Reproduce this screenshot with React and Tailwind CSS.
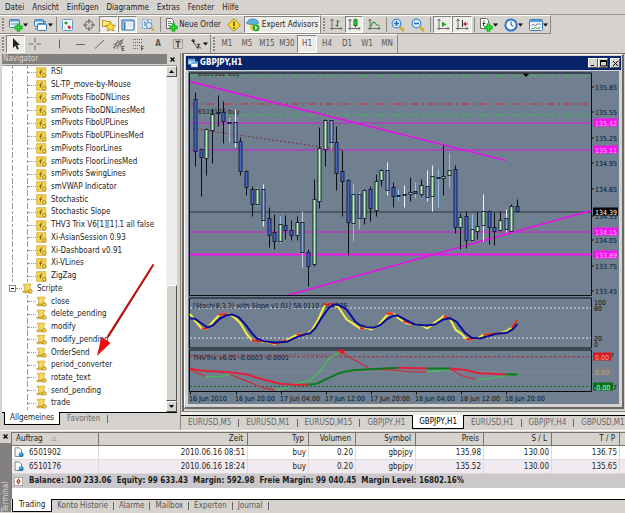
const menus = ["Datei", "Ansicht", "Einfügen", "Diagramme", "Extras", "Fenster", "Hilfe"];
const periods = ["M1", "M5", "M15", "M30", "H1", "H4", "D1", "W1", "MN"];

const indicators = [
  "RSI",
  "SL-TP_move-by-Mouse",
  "smPivots FiboDNLines",
  "smPivots FiboDNLinesMed",
  "smPivots FiboUPLines",
  "smPivots FiboUPLinesMed",
  "smPivots FloorLines",
  "smPivots FloorLinesMed",
  "smPivots SwingLines",
  "smVWAP Indicator",
  "Stochastic",
  "Stochastic Slope",
  "THV3 Trix V6[1][1].1 all false",
  "Xi-AsianSession 0.93",
  "Xi-Dashboard v0.91",
  "Xi-VLines",
  "ZigZag",
];

const scripts = [
  "close",
  "delete_pending",
  "modify",
  "modify_pending",
  "OrderSend",
  "period_converter",
  "rotate_text",
  "send_pending",
  "trade",
];

const chartTabs = [
  "EURUSD,M5",
  "EURUSD,M1",
  "EURUSD,M15",
  "GBPJPY,H1",
  "GBPJPY,H1",
  "EURUSD,H1",
  "GBPJPY,H4",
  "GBPUSD,M15",
];

const orders = [
  ["6501902", "2010.06.16 08:51", "buy", "0.20", "gbpjpy", "135.98", "130.00", "136.75"],
  ["6510176", "2010.06.16 18:24", "buy", "0.20", "gbpjpy", "135.52", "130.00", "135.65"],
];

const terminalTabs = ["Konto Historie", "Alarme", "Mailbox", "Experten", "Journal"];

// body colour, wick colour, high, open/close top, open/close bottom, low
const B = "#4663cf";
const P = "#8ea6dc";
const G = "#b4f5b6";
const K = "#0b1018";
const W = "#f0f4f8";
const S = "#8cc4ea";
const candles = [
  [B, K, 93, 100, 152, 167],
  [B, K, 149, 150, 158, 197],
  [G, K, 129, 130, 159, 176],
  [G, K, 110, 115, 131, 164],
  [B, K, 96, 113, 114, 127],
  [B, K, 102, 113, 122, 144],
  [B, S, 118, 123, 124, 143],
  [P, W, 110, 123, 143, 148],
  [B, K, 138, 142, 172, 176],
  [B, K, 171, 172, 188, 196],
  [B, K, 187, 190, 205, 217],
  [G, S, 188, 190, 205, 207],
  [P, W, 185, 190, 221, 227],
  [B, K, 208, 219, 236, 248],
  [B, K, 215, 233, 242, 250],
  [G, S, 217, 225, 242, 244],
  [B, K, 216, 226, 231, 240],
  [B, K, 221, 231, 236, 241],
  [G, K, 217, 223, 236, 241],
  [P, "#c3cbd6", 212, 223, 253, 268],
  [B, K, 250, 253, 267, 287],
  [G, K, 180, 200, 265, 267],
  [G, K, 128, 149, 202, 209],
  [G, K, 120, 121, 150, 167],
  [P, S, 120, 121, 143, 150],
  [B, K, 127, 143, 174, 191],
  [B, K, 151, 172, 182, 217],
  [B, K, 180, 181, 223, 256],
  [G, S, 184, 195, 224, 242],
  [P, S, 192, 195, 219, 230],
  [G, K, 190, 191, 219, 225],
  [B, K, 187, 190, 209, 222],
  [G, K, 175, 182, 211, 217],
  [G, K, 170, 171, 181, 187],
  [P, W, 163, 171, 191, 196],
  [B, K, 183, 188, 197, 208],
  [B, S, 190, 196, 197, 202],
  [B, W, 186, 195, 196, 208],
  [G, K, 178, 193, 195, 202],
  [B, S, 183, 192, 194, 199],
  [G, K, 180, 186, 195, 197],
  [P, W, 171, 187, 198, 202],
  [G, W, 166, 177, 197, 212],
  [B, S, 170, 178, 179, 208],
  [G, K, 146, 177, 179, 196],
  [G, S, 154, 171, 176, 188],
  [B, K, 166, 170, 228, 234],
  [G, K, 214, 218, 228, 250],
  [B, K, 212, 217, 241, 249],
  [G, S, 215, 230, 241, 242],
  [G, K, 212, 227, 232, 240],
  [G, W, 195, 212, 226, 242],
  [B, K, 211, 212, 228, 245],
  [B, K, 213, 228, 232, 246],
  [G, K, 212, 221, 231, 232],
  [P, W, 210, 219, 230, 233],
  [G, K, 205, 207, 232, 232],
  [B, K, 200, 207, 212, 213],
];

const priceScale = [
  ["135.85", 87],
  ["135.55", 112],
  ["135.25", 138],
  ["134.95", 163],
  ["134.65", 189],
  ["134.35", 216],
  ["134.05", 240],
  ["133.75", 266],
  ["133.45", 291],
];

const priceTags = [
  ["135.42", 123, "#f412f0", "#ffb8fb"],
  ["135.11", 150, "#f412f0", "#ffb8fb"],
  ["134.39", 212, "#000000", "#ffffff"],
  ["134.15", 232, "#f412f0", "#ffb8fb"],
  ["133.89", 255, "#f412f0", "#ffb8fb"],
];

const dates = [
  ["16 Jun 2010", 189],
  ["16 Jun 20:00", 235],
  ["17 Jun 04:00", 280],
  ["17 Jun 12:00", 325],
  ["17 Jun 20:00", 370],
  ["18 Jun 04:00", 415],
  ["18 Jun 12:00", 460],
  ["18 Jun 20:00", 505],
];

const Icon = ({ children, className = "w-[14px] h-[14px]" }) => (
  <svg viewBox="0 0 14 14" className={`${className} shrink-0`} fill="none" aria-hidden="true">
    {children}
  </svg>
);

const Plus = () => (
  <>
    <path d="M9.5 5.5v8M5.5 9.5h8" stroke="#0b7d12" strokeWidth="3.4" />
    <path d="M9.5 5v9M5 9.5h9" stroke="#2bdc33" strokeWidth="2" />
  </>
);

const Caret = () => (
  <svg viewBox="0 0 5 4" className="w-[5px] h-[4px] shrink-0" aria-hidden="true">
    <path d="M0 .5h5l-2.500 3z" fill="#000" />
  </svg>
);

const Grip = () => (
  <div className="w-[6px] shrink-0 flex justify-center py-[2px]">
    <div className="w-[2px] bg-[repeating-linear-gradient(#8a8782_0_2px,#e4e1dc_2px_3px)]" />
  </div>
);

const Sep = ({ className }) => (
  <div className={`${className} shrink-0 flex justify-center`}>
    <div className="w-px my-px bg-[#8b8883]" />
  </div>
);

const ToolButton = ({ label, pressed, className, children }) => (
  <button
    aria-label={label}
    className={`${className} shrink-0 h-full flex items-center justify-center ${
      pressed ? "bg-[#eeece9] border border-t-[#85827e] border-l-[#85827e] border-b-white border-r-white" : ""
    }`}
  >
    {children}
  </button>
);

const MenuBar = () => (
  <nav className="h-[14px] shrink-0 flex items-center gap-2 px-[5px] pt-px">
    {menus.map((m) => (
      <button key={m}>{m}</button>
    ))}
  </nav>
);

const axes = "M3 1v11M1 10.5h12M1.5 3L3 1l1.5 2M11.5 9l1.5 1.5-1.5 1.5";

const MainToolbar = () => (
  <div className="h-5 shrink-0 flex border-t border-[#9b9893]">
    <div className="flex border-t border-b border-t-white border-b-[#8b8883] border-r border-r-[#8b8883]">
      <Grip />
      <ToolButton label="Neues Diagramm" className="w-[25px]">
        <Icon>
          <rect x=".5" y="1.5" width="10" height="8" rx="1" fill="#eaf4fc" stroke="#3b79b4" />
          <path d="M1 2.500h9" stroke="#5b9bd6" strokeWidth="2" />
          <path d="M2 6h6" stroke="#4c8ac0" />
          <Plus />
        </Icon>
        <Caret />
      </ToolButton>
      <ToolButton label="Profile" className="w-[24px]">
        <Icon>
          <rect x=".5" y="1.5" width="9" height="7" rx="1" fill="#e6f0fa" stroke="#3b79b4" />
          <path d="M1 2.500h8" stroke="#5b9bd6" strokeWidth="2" />
          <rect x="3.5" y="5.5" width="9" height="7" rx="1" fill="#f6faff" stroke="#3b79b4" />
          <path d="M4 6.500h8" stroke="#5b9bd6" />
          <path d="M10 3.500h2M2 10v2" stroke="#3b79b4" />
        </Icon>
        <Caret />
      </ToolButton>
      <Sep className="w-[3px]" />
      <ToolButton label="Marktübersicht" className="w-[20px]">
        <Icon>
          <rect x="1.5" y="1.5" width="10" height="11" rx="1" fill="#fdfeff" stroke="#5e9bd0" />
          <path d="M3 5l2-2 2 2-2 2z" fill="#21a428" />
          <path d="M6 9l2-2 2.500 2.500-2 2z" fill="#e0342a" />
          <path d="M8 4h2M3 9h2M3 11h2" stroke="#b9c9d8" />
        </Icon>
      </ToolButton>
      <ToolButton label="Datenfenster" className="w-[21px]">
        <Icon>
          <circle cx="7" cy="7" r="4" stroke="#777" strokeWidth="1.2" />
          <path d="M7 1v4.500M7 8.500V13M1 7h4.500M8.500 7H13" stroke="#666" strokeWidth="1.2" />
        </Icon>
      </ToolButton>
      <ToolButton label="Navigator" pressed className="w-[19px]">
        <Icon>
          <path d="M.5 2.500h3l1 1h4v5h-8z" fill="#ffe98a" stroke="#b99716" />
          <path d="M8.500 4L10 7l3.500.5-2.500 2.300.6 3.200-3.100-1.600-3.100 1.600.6-3.200-2.500-2.300L7 7z" fill="#ffe436" stroke="#a8860d" strokeWidth=".8" />
        </Icon>
      </ToolButton>
      <ToolButton label="Terminal" pressed className="w-[19px]">
        <Icon>
          <rect x="1" y="2" width="12" height="10" rx="1" fill="#f7fbff" stroke="#2f6eb0" strokeWidth="1.2" />
          <path d="M2 3h10" stroke="#4e8ed0" />
          <path d="M3.500 4v7.500" stroke="#3779c0" strokeWidth="2" />
          <path d="M6 6h5M6 8h5" stroke="#c2d3e4" />
        </Icon>
      </ToolButton>
      <ToolButton label="Strategietester" className="w-[21px]">
        <Icon>
          <path d="M1.500 1.500h9v9h-9z" fill="#e7f1fa" stroke="#6d9cc4" strokeDasharray="2 1" />
          <path d="M4 3v5M7 2v5" stroke="#3b6fa0" />
          <circle cx="8" cy="7.5" r="3" fill="#d5ecfb" stroke="#4b8fc4" />
          <path d="M10 9.500l3 3" stroke="#d9a12a" strokeWidth="2" />
        </Icon>
      </ToolButton>
      <Sep className="w-[4px]" />
      <ToolButton label="Neue Order" className="w-[61px] gap-px">
        <Icon>
          <path d="M2.500.5h5l2 2v8h-7z" fill="#fff" stroke="#6b6b6b" />
          <path d="M4 3.500h3M4 5.500h4M4 7.500h2" stroke="#777" />
          <Plus />
        </Icon>
        <span className="whitespace-nowrap">Neue Order</span>
      </ToolButton>
      <ToolButton label="MetaEditor" className="w-[21px]">
        <Icon>
          <path d="M7 .7L13.300 7 7 13.300.7 7z" fill="#ffd92e" stroke="#a88a14" />
          <path d="M7 3.500V8M7 9v1.800" stroke="#5a4a00" strokeWidth="1.5" />
        </Icon>
      </ToolButton>
      <ToolButton label="Expert Advisors" pressed className="w-[76px] gap-[2px]">
        <Icon>
          <path d="M4 6.500h6.500v3c0 2-1 3-3.200 3S4 11.500 4 9.500z" fill="#f2c93b" />
          <path d="M.5 5.500C1.500 2 4 .8 7 1c3 0 5.200 1.500 5.800 4C9 6.800 4.500 7 .5 5.500z" fill="#62b0dd" stroke="#3379a5" strokeWidth=".7" />
          <circle cx="10" cy="9.800" r="3.5" fill="#1fae2a" />
          <path d="M9 7.800l3 2-3 2z" fill="#fff" />
        </Icon>
        <span className="whitespace-nowrap">Expert Advisors</span>
      </ToolButton>
    </div>
    <div className="flex border-t border-b border-t-white border-b-[#8b8883] border-r border-r-[#8b8883]">
      <Grip />
      <ToolButton label="Balkendiagramm" className="w-[18px]">
        <Icon>
          <path d={axes} stroke="#6b6b6b" />
          <path d="M8.500 2v7M6.500 7.500h2M8.500 3.500h2" stroke="#1c8c24" strokeWidth="1.2" />
        </Icon>
      </ToolButton>
      <ToolButton label="Kerzendiagramm" pressed className="w-[18px]">
        <Icon>
          <path d={axes} stroke="#6b6b6b" />
          <path d="M8.500.5v9" stroke="#0e7a16" />
          <rect x="7" y="2" width="3" height="5.5" fill="#2fd138" stroke="#0e7a16" />
        </Icon>
      </ToolButton>
      <ToolButton label="Liniendiagramm" className="w-[22px]">
        <Icon>
          <path d={axes} stroke="#6b6b6b" />
          <path d="M3.500 9C5 4 7 3 8.500 5.500 9.500 7 11 7.500 12.500 8" stroke="#279b2e" strokeWidth="1.2" />
        </Icon>
      </ToolButton>
      <Sep className="w-[3px]" />
      <ToolButton label="Vergrößern" className="w-[19px]">
        <Icon>
          <path d="M9 9l4 4" stroke="#d9a92c" strokeWidth="2.5" />
          <circle cx="5.5" cy="5.5" r="4.300" fill="#d9effc" stroke="#4a8fcb" strokeWidth="1.3" />
          <path d="M5.500 3v5M3 5.500h5" stroke="#2a68b8" strokeWidth="1.5" />
        </Icon>
      </ToolButton>
      <ToolButton label="Verkleinern" className="w-[21px]">
        <Icon>
          <path d="M9 9l4 4" stroke="#d9a92c" strokeWidth="2.5" />
          <circle cx="5.5" cy="5.5" r="4.300" fill="#d9effc" stroke="#4a8fcb" strokeWidth="1.3" />
          <path d="M3 5.500h5" stroke="#2a68b8" strokeWidth="1.5" />
        </Icon>
      </ToolButton>
      <Sep className="w-[5px]" />
      <ToolButton label="Automatischer Bildlauf" pressed className="w-[19px]">
        <Icon>
          <path d={axes} stroke="#6b6b6b" />
          <path d="M6 3.500l4.500 3L6 9z" fill="#1ea529" />
        </Icon>
      </ToolButton>
      <ToolButton label="Diagramm verschieben" pressed className="w-[20px]">
        <Icon>
          <path d={axes} stroke="#6b6b6b" />
          <path d="M7.500 2v7" stroke="#333" />
          <path d="M8 6l3-2.500v5z" fill="#c22a1e" />
          <path d="M10 6h3" stroke="#c22a1e" />
        </Icon>
      </ToolButton>
      <Sep className="w-[4px]" />
      <ToolButton label="Indikatoren" className="w-[25px]">
        <Icon>
          <path d="M1.500.5h6l2 2v8h-8z" fill="#fff" stroke="#6b6b6b" />
          <path d="M6 3C4.500 3 4.500 4 4.500 8M3.500 5.500h3" stroke="#333" />
          <Plus />
        </Icon>
        <Caret />
      </ToolButton>
      <ToolButton label="Zeiteinheiten" className="w-[25px]">
        <Icon>
          <circle cx="7" cy="7" r="5.600" fill="#f4faff" stroke="#2b74c8" strokeWidth="2" />
          <path d="M7 3.500V7l2.500 1" stroke="#33475c" />
        </Icon>
        <Caret />
      </ToolButton>
      <ToolButton label="Vorlagen" className="w-[24px]">
        <Icon>
          <rect x=".5" y="1.5" width="13" height="11" rx="1" fill="#f2f7fb" stroke="#3c7cb4" />
          <path d="M1 3h12" stroke="#5b9bd6" strokeWidth="2" />
          <path d="M2.500 7.500l2-1 2 1 2-1.500h3" stroke="#54748c" />
          <path d="M2.500 10.500h2l2-1 2 1 3-1" stroke="#3e9a44" />
        </Icon>
        <Caret />
      </ToolButton>
    </div>
  </div>
);

const DrawToolbar = () => (
  <div className="h-[19px] shrink-0 flex">
    <div className="flex border-t border-t-white border-r border-r-[#8b8883]">
      <Grip />
      <ToolButton label="Cursor" pressed className="w-[19px]">
        <Icon>
          <path d="M4 1v10l2.500-2.300L8 12.500l1.800-.8L8.200 8H11z" fill="#222" />
        </Icon>
      </ToolButton>
      <ToolButton label="Fadenkreuz" className="w-[20px]">
        <Icon>
          <path d="M7 1v4.500M7 8.500V13M1 7h4.500M8.500 7H13" stroke="#777" strokeWidth="1.2" />
        </Icon>
      </ToolButton>
      <ToolButton label="Vertikale Linie" className="w-[27px]">
        <Icon>
          <path d="M7.500 2.500v9" stroke="#666" />
        </Icon>
      </ToolButton>
      <ToolButton label="Horizontale Linie" className="w-[16px]">
        <Icon>
          <path d="M3 7.500h9" stroke="#666" />
        </Icon>
      </ToolButton>
      <ToolButton label="Trendlinie" className="w-[22px]">
        <Icon>
          <path d="M3 11.500L12 3" stroke="#666" />
        </Icon>
      </ToolButton>
      <ToolButton label="Kanal" className="w-[18px]">
        <Icon>
          <path d="M1 8l10-5M1 10.500l10-5M2 12l4-9M5 12l4-9M8 10l3-8" stroke="#666" strokeWidth=".9" />
          <path d="M12.500 9.500H10v4h2.500M10 11.500h2" stroke="#444" strokeWidth=".9" />
        </Icon>
      </ToolButton>
      <ToolButton label="Fibonacci" className="w-[20px]">
        <Icon>
          <path d="M2 2.500h10M2 5.500h10M2 8.500h10M2 11.500h6" stroke="#666" strokeDasharray="1 1" />
          <path d="M12.500 9.500h-2v4M10.500 11.500h2" stroke="#444" strokeWidth=".9" />
        </Icon>
      </ToolButton>
      <ToolButton label="Text" className="w-[20px] font-bold text-[#555]">
        A
      </ToolButton>
      <ToolButton label="Textfeld" className="w-[19px]">
        <Icon>
          <rect x="2.5" y="2.5" width="9" height="9" stroke="#666" strokeDasharray="1 1" />
          <path d="M4.500 4.500h5M7 4.500v6" stroke="#444" strokeWidth="1.5" />
        </Icon>
      </ToolButton>
      <ToolButton label="Pfeile" className="w-[23px]">
        <Icon>
          <path d="M2 3l3-1 1 3-1.500 1zM7.500 6.500l4 .5-2 2z" fill="#333" />
          <path d="M4 5l4 5M9 8l3 3.500" stroke="#444" />
          <path d="M7 10.500L10 9v3z" fill="#444" />
        </Icon>
        <Caret />
      </ToolButton>
    </div>
    <div className="flex border-t border-t-white border-r border-r-[#8b8883]">
      <Grip />
      {periods.map((p) => (
        <ToolButton key={p} label={p} pressed={p === "H1"} className="w-[20px] text-[#555]">
          {p}
        </ToolButton>
      ))}
    </div>
  </div>
);

const IndicatorIcon = () => (
  <Icon className="w-[11px] h-[11px]">
    <rect x="1" y="1" width="11.500" height="12" fill="#f6d352" stroke="#cfa52a" />
    <path d="M8 3.500c-2-.5-2 1-2.500 6.500M4 6.500h4" stroke="#6b5200" strokeWidth="1.1" />
    <circle cx="10.500" cy="10.500" r="2.200" fill="#ffe14d" stroke="#8f7318" />
  </Icon>
);

const ScriptIcon = () => (
  <Icon className="w-[11px] h-[11px]">
    <path d="M2 1.500h9c1 1 0 2-1 2v7H3.500v-7C1.500 3.500 1 2.500 2 1.500z" fill="#f8d95c" stroke="#c8a436" />
    <path d="M1 10.500h8v2H2c-1 0-1-1.500-1-2z" fill="#eec13b" stroke="#b48c1c" strokeWidth=".8" />
    <circle cx="10.800" cy="10.800" r="2.200" fill="#ffe14d" stroke="#8f7318" />
  </Icon>
);

// one leaf of the tree with its dotted connector
const Leaf = ({ root, icon, children }) => (
  <li className="flex-1 flex items-stretch">
    <span className={`w-[15px] shrink-0 ${root ? "border-l border-dashed border-[#999]" : ""}`} />
    <span className="w-[9px] shrink-0 border-l border-dashed border-[#999] flex items-center">
      <span className="w-full border-t border-dotted border-[#999]" />
    </span>
    <span className="flex items-center gap-[4px] whitespace-nowrap">
      {icon}
      {children}
    </span>
  </li>
);

const ScrollButton = ({ label, d }) => (
  <button
    aria-label={label}
    className="h-[11px] shrink-0 flex items-center justify-center bg-[#d6d3ce] border border-t-white border-l-white border-b-[#55534f] border-r-[#55534f]"
  >
    <svg viewBox="0 0 5 3" className="w-[5px] h-[3px]" aria-hidden="true">
      <path d={d} fill="#000" />
    </svg>
  </button>
);

const Navigator = () => (
  <aside className="w-[181px] shrink-0 flex flex-col pl-[2px] pr-[3px] pt-px pb-[5px] border-r border-[#8b8883]">
    <div className="h-[10px] shrink-0 flex items-center">
      <h2 className="flex-1 h-full flex items-center bg-[#838180] text-[#dad7d2] pl-px">Navigator</h2>
      <button aria-label="Navigator schließen" className="w-[10px] flex justify-center">
        <svg viewBox="0 0 5 5" className="w-[5px] h-[5px]" aria-hidden="true">
          <path d="M.5.5l4 4M4.500.5l-4 4" stroke="#000" strokeWidth="1.3" />
        </svg>
      </button>
    </div>
    <div className="relative flex-1 min-h-0 mt-px flex bg-white border-t border-[#9b9893]">
      <ul className="flex-1 flex flex-col pl-[10px] pb-[2px]">
        {indicators.map((name) => (
          <Leaf key={name} root icon={<IndicatorIcon />}>
            {name}
          </Leaf>
        ))}
        <li className="flex-1 flex items-center">
          <span className="-ml-[3px] size-[7px] border border-[#888] flex items-center justify-center">
            <span className="w-[3px] h-px bg-black" />
          </span>
          <span className="w-[6px] border-t border-dotted border-[#999]" />
          <span className="flex items-center gap-[4px]">
            <ScriptIcon />
            Scripte
          </span>
        </li>
        {scripts.map((name) => (
          <Leaf key={name} icon={<ScriptIcon />}>
            {name}
          </Leaf>
        ))}
      </ul>
      <div className="w-[11px] shrink-0 flex flex-col bg-[#f0eeeb]">
        <ScrollButton label="Nach oben" d="M0 3h5L2.500 0z" />
        <div className="flex-[209]" />
        <div className="flex-[115] bg-[#d6d3ce] border border-t-white border-l-white border-b-[#55534f] border-r-[#55534f]" />
        <ScrollButton label="Nach unten" d="M0 0h5L2.500 3z" />
      </div>
      <svg viewBox="0 0 60 95" className="absolute left-[94px] bottom-[54px] w-[60px] h-[95px]" aria-hidden="true">
        <path d="M57.500 1.500L12 74" stroke="#8f0f0f" strokeWidth="1.8" />
        <path d="M57 1.500L11 74" stroke="#e01010" strokeWidth="1.2" />
        <path d="M1 93l4.500-19 4 2.500 5 3.500z" fill="#ee0c0c" />
      </svg>
    </div>
    <div className="h-[13px] shrink-0 flex">
      <div className="w-[2px] border-t border-black" />
      <button className="px-[5px] bg-white border-l border-b border-r border-black">Allgemeines</button>
      <div className="flex-1 flex items-center border-t border-black text-[#666]">
        <button className="px-[7px]">Favoriten</button>
        <span className="w-px h-[8px] bg-[#666]" />
      </div>
    </div>
  </aside>
);

const Chart = () => (
  <svg viewBox="188 72 431 332" className="block w-full flex-1 min-h-0 bg-[#708090]" fill="none" fontSize="7">
    <clipPath id="price">
      <rect x="190" y="74" width="401" height="222" />
    </clipPath>
    <g clipPath="url(#price)">
      <path d="M190 76.500h397M190 115.500h397" stroke="#3fc04a" strokeDasharray="7 4 2 4" />
      <path d="M190 104.500h397" stroke="#d8222a" strokeDasharray="7 4 2 4" />
      <path d="M190 123.500h401M190 150.500h401M190 232.500h401" stroke="#d41bdc" />
      <path d="M190 255h401" stroke="#f412f0" strokeWidth="2" />
      <path d="M190 212.500h401" stroke="#2b333d" />
      <path d="M190 82L506 161M287 296L591 211" stroke="#e016e2" strokeWidth="1.7" />
      <path d="M193 129l149 21.500" stroke="#8c2a3c" strokeDasharray="2 2" />
      <text x="198" y="76" fill="#1a222c">6501902 buy</text>
      <text x="198" y="114" fill="#1a222c">6510176 buy</text>
      {candles.map(([body, wick, high, top, bottom, low], i) => {
        const x = Math.round(195.2 + i * 5.642) + 0.5;
        return (
          <g key={i}>
            <rect x={x - 0.5} y={high} width="1" height={low - high} fill={wick} />
            <rect x={x - 1.5} y={top} width="3" height={Math.max(bottom - top, 1)} fill={body} stroke="#101a30" strokeWidth=".9" />
          </g>
        );
      })}
      <path d="M522.500 74h7L526 77.500z" fill="#000" />
    </g>

    <path d="M189.500 73.500h402v222.500h-402zM189.500 298.500h402v50h-402zM189.500 350.500h402v41.500h-402z" stroke="#0a0d12" />
    <path d="M190 308.500h401M190 338.500h401" stroke="#dfe5ea" strokeDasharray="2 2" />
    <text x="193" y="308" fill="#10161e">[Stoch(8,3,3) with Slope v1.01] 58.0110 48.4376</text>
    <text x="193" y="360" fill="#10161e">THVTrix v6.01 -0.0003 -0.0001</text>

    <g transform="translate(180 225) scale(0.3333)" strokeLinejoin="round">
      <path
        d="M30 268L45 288 65 312H82L100 290 120 270 145 269 160 276 180 295 200 328 215 347 235 350 270 354 285 359 320 347 350 331 380 329 395 318 415 285 435 240 455 238 475 248 500 285 520 298 540 312 560 310 575 315 595 303 625 267H640L660 285 680 296 705 300 725 302 742 312 760 298 792 274 810 283 827 316 845 328 860 345 875 343 895 341 910 331 950 328 975 322 995 310 1012 286"
        stroke="#f6f03c"
        strokeWidth="6"
      />
      <path
        d="M65 312H82M115 270L143 269M215 347L245 352M270 354L290 357 320 348M350 331H375M432 240L460 238M540 311H553M618 267H640M670 290L705 300M792 274L812 283M858 345L885 342M910 331L965 326M995 310L1012 286"
        stroke="#e0222a"
        strokeWidth="6"
      />
      <path
        d="M30 281L45 283 65 297 82 309 100 302 120 282 140 272 155 270 175 277 195 298 215 325 230 342 250 350 285 354 320 352 345 340 370 331 390 326 405 312 425 280 445 252 460 241H475L500 255 525 290 540 302 560 308 580 310 600 302 620 285 640 274 652 273 680 288 705 300 740 303 765 300 790 285 810 281 830 292 855 325 875 340 900 342 925 335 950 328 980 325 1000 313 1012 298"
        stroke="#0b0b96"
        strokeWidth="6"
      />
      <path d="M30 397H1233" stroke="#a32632" strokeWidth="3" strokeDasharray="8 6" />
      <path d="M30 391H490" stroke="#a32632" strokeWidth="3" strokeDasharray="3 6" />
      <path d="M30 441H1233" stroke="#8f8a90" strokeWidth="3" strokeDasharray="8 6" />
      <path d="M30 486H1233" stroke="#146b2a" strokeWidth="3" strokeDasharray="6 6" />
      <path d="M30 436L75 455M150 450L200 470 250 490 285 496M490 387L530 410 570 433 640 437 680 441 740 443M810 433L850 455 890 465" stroke="#d02a3a" strokeWidth="3.5" />
      <path d="M75 457L120 456 150 450M285 496L320 490 345 478 390 468 420 440 450 400 480 385 490 387M740 442L810 435M890 465L930 462 985 452 1012 447" stroke="#3ecb50" strokeWidth="3.5" />
      <path d="M30 432L60 438 90 440 150 443 200 450 250 465 300 478 340 481H385M655 430L740 432M810 432L850 436 900 446 975 450" stroke="#e01f38" strokeWidth="6" />
      <path d="M385 481L410 478 440 463 480 445 520 437 570 434 655 430M740 432H810M975 450H1012" stroke="#0d7a20" strokeWidth="6" />
      <path d="M475 376h18v8l-6 6-12-8z" fill="#f01818" />
    </g>

    <g fill="#0c1218">
      {priceScale.map(([label, y]) => (
        <g key={label}>
          <path d={`M592 ${y + 0.5}h2`} stroke="#0c1218" />
          <text x="595" y={y + 3}>{label}</text>
        </g>
      ))}
      <text x="594" y="305">100</text>
      <text x="594" y="311">80</text>
      <text x="594" y="341">20</text>
      <text x="594" y="347">0</text>
      {dates.map(([label, x]) => (
        <g key={label}>
          <path d={`M${x + 1.5} 392v3`} stroke="#0c1218" />
          <text x={x} y="401">{label}</text>
        </g>
      ))}
    </g>
    {priceTags.map(([label, y, fill, color]) => (
      <g key={label}>
        <rect x="593" y={y - 4} width="25" height="8" fill={fill} />
        <text x="595" y={y + 3} fill={color}>{label}</text>
      </g>
    ))}
    <text x="610" y="358" fill="#0c1218">7</text>
    <text x="613" y="390" fill="#0c1218">7</text>
    <rect x="593" y="353" width="18" height="8" fill="#d01c28" />
    <text x="595" y="360" fill="#f5a4a8">0.00</text>
    <rect x="593" y="368" width="18" height="8" fill="#807f80" />
    <text x="595" y="375" fill="#aaaaaa">0.00</text>
    <rect x="593" y="383" width="20" height="8" fill="#067012" />
    <text x="594" y="390" fill="#d6f0d8">-0.00</text>
  </svg>
);

const WindowButton = ({ label, d }) => (
  <button
    aria-label={label}
    className="w-[10px] h-[10px] flex items-center justify-center bg-[#d6d3ce] border border-t-white border-l-white border-b-[#55534f] border-r-[#55534f]"
  >
    <svg viewBox="0 0 7 7" className="w-[7px] h-[7px]" fill="none" aria-hidden="true">
      <path d={d} stroke="#000" />
    </svg>
  </button>
);

const ChartWindow = () => (
  <section className="flex-1 min-h-0 flex flex-col mr-px bg-[#d6d3ce] border-t border-l border-t-white border-l-white border-r-2 border-b-2 border-r-[#6b6966] border-b-[#6b6966] p-px">
    <div className="h-[14px] shrink-0 flex items-center bg-[#0a246a] pl-[2px] pr-px">
      <Icon className="w-[10px] h-[10px]">
        <rect x=".5" y="1.5" width="9" height="7" fill="#cfe5fa" stroke="#8fc0ee" />
        <path d="M1 3h8" stroke="#4a90d8" strokeWidth="2" />
        <rect x="4.5" y="5.5" width="9" height="7" fill="#fff" stroke="#8fc0ee" />
        <path d="M5 7h8" stroke="#4a90d8" strokeWidth="2" />
      </Icon>
      <h1 className="flex-1 pl-[2px] text-white font-bold">GBPJPY,H1</h1>
      <WindowButton label="Minimieren" d="M1 5.500h3" />
      <WindowButton label="Maximieren" d="M.5.5h6v5.500h-6zM.5 1.500h6" />
      <span className="w-[2px]" />
      <WindowButton label="Schließen" d="M1 1l5 5M6 1L1 6" />
    </div>
    <div className="flex-1 min-h-0 flex flex-col p-[2px] pt-px bg-[#d6d3ce]">
      <Chart />
    </div>
  </section>
);

const Workspace = () => (
  <main className="flex-1 min-w-0 flex flex-col pb-px">
    <div className="flex-1 min-h-0 flex flex-col ml-px border-t border-l-2 border-[#6b6966] pb-[2px]">
      <ChartWindow />
    </div>
    <div className="h-[4px] shrink-0 border-t border-[#8b8883] bg-[#efedea]" />
    <div className="h-[14px] shrink-0 flex overflow-hidden text-[#666] whitespace-nowrap">
      {chartTabs.map((tab, i) =>
        i === 4 ? (
          <button key={i} className="px-[6px] bg-white text-black border-l border-r border-b border-black">
            {tab}
          </button>
        ) : (
          <div key={i} className="flex items-center border-t border-black">
            <button className="px-[7px]">{tab}</button>
            {i !== 3 && i !== 7 && <span className="w-px h-[8px] bg-[#666]" />}
          </div>
        )
      )}
      <div className="flex-1 border-t border-black" />
    </div>
  </main>
);

const th = "h-[13px] p-0 px-[4px] font-normal text-right bg-[#d6d3ce] border-r border-b border-[#77746f]";

const Terminal = () => (
  <section className="h-[83px] shrink-0 flex border-t border-white">
    <div className="w-[11px] shrink-0 flex flex-col">
      <button aria-label="Terminal schließen" className="h-[11px] flex items-center justify-center">
        <svg viewBox="0 0 5 5" className="w-[5px] h-[5px]" aria-hidden="true">
          <path d="M.5.5l4 4M4.500.5l-4 4" stroke="#000" strokeWidth="1.3" />
        </svg>
      </button>
      <h2 className="flex-1 mx-px bg-[#838180] text-[#dad7d2] flex items-center [writing-mode:vertical-rl] rotate-180">
        Terminal
      </h2>
    </div>
    <div className="flex-1 min-w-0 flex flex-col pt-px">
      <div className="flex-1 bg-white border-t border-l border-[#77746f]">
        <table className="w-full table-fixed border-separate border-spacing-0">
          <colgroup>
            <col className="w-[87px]" />
            <col className="w-[149px]" />
            <col className="w-[61px]" />
            <col className="w-[47px]" />
            <col className="w-[60px]" />
            <col className="w-[68px]" />
            <col className="w-[68px]" />
            <col className="w-[68px]" />
            <col />
          </colgroup>
          <thead>
            <tr>
              <th className={`${th} !text-left`}>
                Auftrag
                <svg viewBox="0 0 6 5" className="inline w-[6px] h-[5px] ml-2" fill="none" aria-hidden="true">
                  <path d="M3 .5l-2.500 4h5z" stroke="#999" strokeWidth=".7" />
                </svg>
              </th>
              <th className={th}>Zeit</th>
              <th className={th}>Typ</th>
              <th className={th}>Volumen</th>
              <th className={th}>Symbol</th>
              <th className={th}>Preis</th>
              <th className={th}>S / L</th>
              <th className={th}>T / P</th>
              <td className="h-[13px] p-0 bg-[#d6d3ce] border-b border-[#77746f]" />
            </tr>
          </thead>
          <tbody>
            {orders.map((row, r) => (
              <tr key={row[0]} className={r ? "bg-[#f1ebf1]" : "bg-white"}>
                {row.map((cell, c) => (
                  <td key={c} className="h-[14px] p-0 px-[2px] text-right border-r border-b border-[#dcd8dc]">
                    {c ? (
                      cell
                    ) : (
                      <span className="flex items-center gap-[5px]">
                        <Icon className="w-[10px] h-[11px]">
                          <path d="M1.500.5h6l3 3v9h-9z" fill="#fff" stroke="#555" />
                          <circle cx="10" cy="10" r="3.5" fill="#1f86c4" />
                          <circle cx="9" cy="9" r="1.2" fill="#7fd0f2" />
                        </Icon>
                        {cell}
                      </span>
                    )}
                  </td>
                ))}
                <td className="p-0 border-b border-[#dcd8dc]" />
              </tr>
            ))}
            <tr className="bg-[#cbc8cb]">
              <td colSpan="9" className="h-[14px] p-0 pl-[2px] font-bold">
                <span className="flex items-center gap-[6px] whitespace-pre">
                  <Icon className="w-[9px] h-[9px]">
                    <rect x=".5" y=".5" width="13" height="13" fill="#fff" stroke="#888" />
                    <path d="M7 2l3.500 5L7 12 3.500 7z" fill="#c0361c" />
                    <path d="M7 5v4" stroke="#fff" />
                  </Icon>
                  Balance: 100 233.06  Equity: 99 633.43  Margin: 592.98  Freie Margin: 99 040.45  Margin Level: 16802.16%
                </span>
              </td>
            </tr>
          </tbody>
        </table>
      </div>
      <div className="h-[14px] shrink-0 flex pb-px">
        <button className="ml-px px-[6px] bg-white border-l border-r border-b border-black">Trading</button>
        <div className="flex-1 flex items-center border-t border-black text-[#555]">
          {terminalTabs.map((tab) => (
            <div key={tab} className="flex items-center">
              <button className="px-[5px]">{tab}</button>
              <span className="w-px h-[8px] bg-[#666]" />
            </div>
          ))}
        </div>
      </div>
    </div>
  </section>
);

const App = () => {
  return (
    <div className="w-full h-screen min-h-[420px] flex flex-col overflow-hidden bg-[#d6d3ce] text-[#1c1c1c] text-[8px] leading-[10px] font-['DejaVu_Sans_Condensed','DejaVu_Sans',sans-serif]">
      <MenuBar />
      <MainToolbar />
      <DrawToolbar />
      <div className="flex-1 min-h-0 flex">
        <Navigator />
        <Workspace />
      </div>
      <Terminal />
    </div>
  );
};

export default App;
